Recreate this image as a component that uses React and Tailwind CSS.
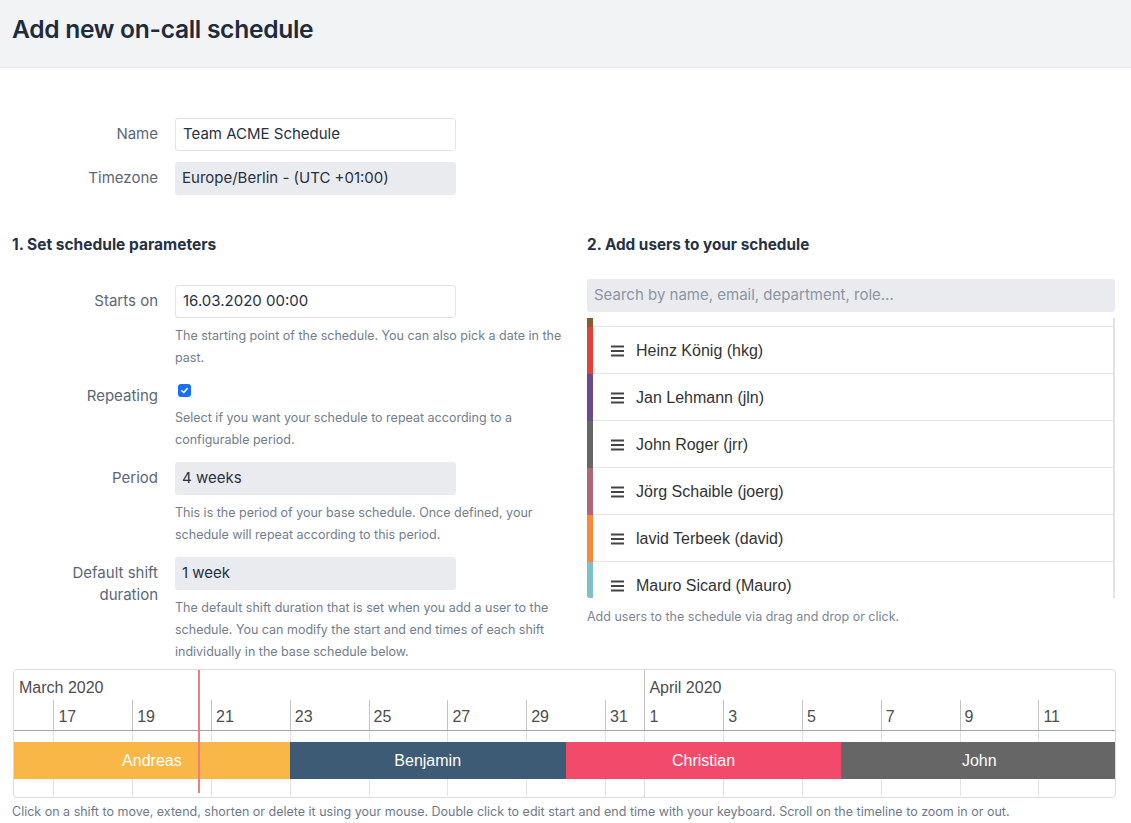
import React from "react";

const DAY = 39.4;
const ticks = [
  { d: 1, l: "17" }, { d: 3, l: "19" }, { d: 5, l: "21" }, { d: 7, l: "23" },
  { d: 9, l: "25" }, { d: 11, l: "27" }, { d: 13, l: "29" }, { d: 15, l: "31" },
  { d: 16, l: "1" }, { d: 18, l: "3" }, { d: 20, l: "5" }, { d: 22, l: "7" },
  { d: 24, l: "9" }, { d: 26, l: "11" },
];
const shifts = [
  { name: "Andreas", color: "#f8b746", days: 7 },
  { name: "Benjamin", color: "#3e5b76", days: 7 },
  { name: "Christian", color: "#f24a6a", days: 7 },
  { name: "John", color: "#666666", days: 7 },
];
const users = [
  { name: "", color: "#8a5a32" },
  { name: "Heinz König (hkg)", color: "#e2403a" },
  { name: "Jan Lehmann (jln)", color: "#6a4a8c" },
  { name: "John Roger (jrr)", color: "#666666" },
  { name: "Jörg Schaible (joerg)", color: "#b06677" },
  { name: "lavid Terbeek (david)", color: "#f7893b" },
  { name: "Mauro Sicard (Mauro)", color: "#7dbfcb" },
];

function Bars() {
  return (
    <svg width="13" height="12" viewBox="0 0 13 12" className="shrink-0">
      <rect x="0" y="0.5" width="13" height="2" fill="#444" />
      <rect x="0" y="5" width="13" height="2" fill="#444" />
      <rect x="0" y="9.5" width="13" height="2" fill="#444" />
    </svg>
  );
}

function Label({ children }) {
  return (
    <div className="w-[146px] shrink-0 text-right text-[15px] leading-[22px] pt-[5px] text-[#5c6776]">
      {children}
    </div>
  );
}

function Help({ children }) {
  return (
    <div className="mt-[7px] w-[394px] text-[12.5px] leading-[22px] text-[#737e8c]">{children}</div>
  );
}

function Field({ value, white }) {
  return (
    <div
      className={
        "w-[281px] h-[33px] rounded-[3px] flex items-center px-[7px] text-[15px] text-[#263243] " +
        (white ? "bg-white border border-[#dfe3e8]" : "bg-[#e9ebef]")
      }
    >
      {value}
    </div>
  );
}

export default function App() {
  return (
    <div className="w-[1131px] h-[823px] bg-white overflow-hidden" style={{ fontFamily: "Inter, 'Noto Sans', sans-serif" }}>
      <div className="h-[68px] bg-[#f1f3f5] border-b border-[#e4e7eb] px-3 pt-[13px]">
        <h1 className="text-[24.6px] leading-[33px] font-semibold text-[#1e2b3c] tracking-[-0.3px]">Add new on-call schedule</h1>
      </div>

      <div className="px-3">
        <div className="mt-[50px] flex flex-col gap-[11px]">
          <div className="flex gap-[17px]">
            <Label>Name</Label>
            <Field value="Team ACME Schedule" white />
          </div>
          <div className="flex gap-[17px]">
            <Label>Timezone</Label>
            <Field value="Europe/Berlin - (UTC +01:00)" />
          </div>
        </div>

        <div className="mt-[40px] flex">
          <div className="w-[575px] shrink-0">
            <h2 className="text-[15.5px] leading-5 font-bold text-[#263243]">1. Set schedule parameters</h2>
            <div className="mt-[30px] flex flex-col gap-[11px]">
              <div className="flex gap-[17px]">
                <Label>Starts on</Label>
                <div>
                  <Field value="16.03.2020 00:00" white />
                  <Help>The starting point of the schedule. You can also pick a date in the past.</Help>
                </div>
              </div>
              <div className="flex gap-[17px]">
                <Label>Repeating</Label>
                <div>
                  <div className="h-[20px] pt-[4px] pl-[3px]">
                    <div className="w-[13px] h-[13px] rounded-[3px] bg-[#1b6ff0] flex items-center justify-center">
                      <svg width="9" height="9" viewBox="0 0 10 10">
                        <path d="M2 5.2 L4.2 7.3 L8 2.8" stroke="white" strokeWidth="1.7" fill="none" strokeLinecap="round" strokeLinejoin="round" />
                      </svg>
                    </div>
                  </div>
                  <Help>Select if you want your schedule to repeat according to a configurable period.</Help>
                </div>
              </div>
              <div className="flex gap-[17px]">
                <Label>Period</Label>
                <div>
                  <Field value="4 weeks" />
                  <Help>This is the period of your base schedule. Once defined, your schedule will repeat according to this period.</Help>
                </div>
              </div>
              <div className="flex gap-[17px]">
                <Label>Default shift duration</Label>
                <div>
                  <Field value="1 week" />
                  <Help>The default shift duration that is set when you add a user to the schedule. You can modify the start and end times of each shift individually in the base schedule below.</Help>
                </div>
              </div>
            </div>
          </div>

          <div className="w-[528px] shrink-0">
            <h2 className="text-[15.3px] leading-5 font-bold text-[#263243]">2. Add users to your schedule</h2>
            <div className="mt-[24px] h-[33px] rounded-[3px] bg-[#e9ebef] flex items-center px-[7px] text-[15px] text-[#8b95a3]">
              Search by name, email, department, role...
            </div>
            <div className="mt-[6px] h-[280px] overflow-hidden border-r-2 border-[#e2e2e2] rounded-bl-[3px]" style={{ fontFamily: "'Liberation Sans', Arial, sans-serif" }}>
              <div className="-mt-[38px]">
                {users.map((u, i) => (
                  <div key={i} className="flex h-[47px]">
                    <div className="w-[6px] shrink-0" style={{ backgroundColor: u.color }} />
                    <div className="flex-1 flex items-center gap-[12px] pl-[18px] pt-[1px] border-b border-[#e6e6e6] text-[16px] text-[#333]">
                      {u.name && <Bars />}
                      <span>{u.name}</span>
                    </div>
                  </div>
                ))}
              </div>
            </div>
            <div className="mt-[10px] text-[12.5px] leading-[18px] text-[#7c8695]">Add users to the schedule via drag and drop or click.</div>
          </div>
        </div>

        <div
          className="mt-[6px] ml-[1px] w-[1103px] h-[129px] border border-[#dcdcdc] rounded-[4px] relative overflow-hidden text-[16px] text-[#4d4d4d]"
          style={{ fontFamily: "'Liberation Sans', Arial, sans-serif" }}
        >
          <div className="absolute top-0 bottom-0 border-l border-[#c4c4c4]" style={{ left: 16 * DAY }} />
          <div className="h-[30px] relative">
            <span className="absolute left-[5px] top-[6px]">March 2020</span>
            <span className="absolute top-[6px]" style={{ left: 16 * DAY + 5 }}>April 2020</span>
          </div>
          <div className="h-[31px] relative border-b border-[#a3a3a3]">
            {ticks.map((t) => (
              <div key={t.d} className="absolute top-0 bottom-0 border-l border-[#c4c4c4]" style={{ left: t.d * DAY }}>
                <span className="absolute left-[4px] top-[5px]">{t.l}</span>
              </div>
            ))}
          </div>
          <div className="h-[65px] relative">
            {ticks.map((t) => (
              <div key={t.d} className="absolute top-0 bottom-0 border-l border-[#e3e3e3]" style={{ left: t.d * DAY }} />
            ))}
            <div className="absolute top-[11px] left-0 h-[37px] flex">
              {shifts.map((s) => (
                <div
                  key={s.name}
                  className="h-full flex items-center justify-center text-white"
                  style={{ width: s.days * DAY, backgroundColor: s.color }}
                >
                  {s.name}
                </div>
              ))}
            </div>
          </div>
          <div className="absolute top-0 bottom-[4px] w-[2px] bg-[#f47c7c]" style={{ left: 4.68 * DAY }} />
        </div>

        <div className="mt-[5px] text-[12.5px] leading-[18px] text-[#6f7a89]">
          Click on a shift to move, extend, shorten or delete it using your mouse. Double click to edit start and end time with your keyboard. Scroll on the timeline to zoom in or out.
        </div>
      </div>
    </div>
  );
}
